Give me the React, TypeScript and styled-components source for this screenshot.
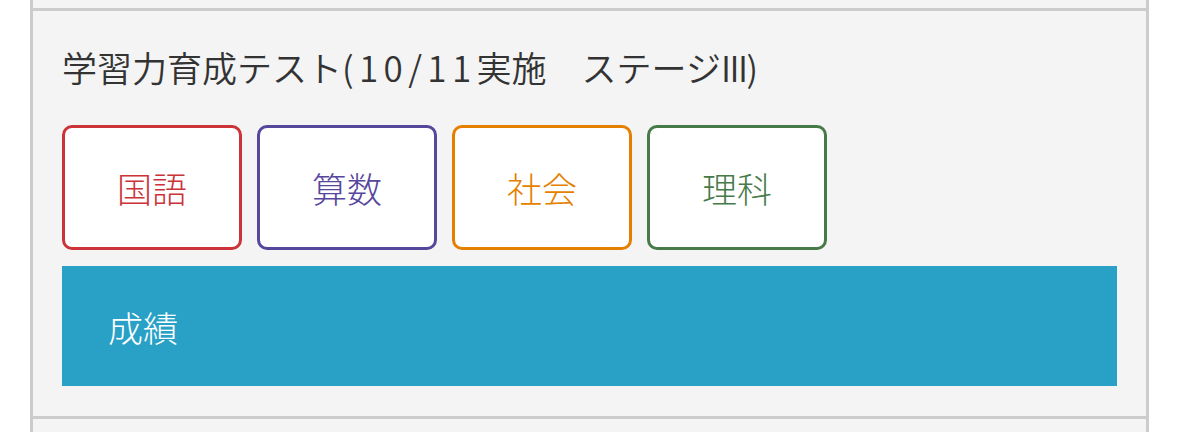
import React from "react";
import styled, { createGlobalStyle } from "styled-components";

const GlobalStyle = createGlobalStyle`
  html, body {
    margin: 0;
    padding: 0;
    background: #ffffff;
    font-family: "Noto Sans CJK JP", "Noto Sans", sans-serif;
  }
`;

const Page = styled.div`
  padding: 0 30px;
  width: 1119px;
  box-sizing: content-box;
`;

const PrevItem = styled.div`
  height: 8px;
  background: #f4f4f4;
  border-left: 3px solid #cccccc;
  border-right: 3px solid #cccccc;
  box-sizing: border-box;
`;

const Item = styled.section`
  background: #f4f4f4;
  border: 3px solid #cccccc;
  box-sizing: border-box;
  padding: 29px 29px 30px 29px;
  display: flex;
  flex-direction: column;
`;

const NextItem = styled.div`
  height: 20px;
  background: #f4f4f4;
  border-left: 3px solid #cccccc;
  border-right: 3px solid #cccccc;
  box-sizing: border-box;
`;

const Title = styled.h2`
  margin: 0;
  font-size: 35px;
  font-weight: 350;
  color: #333333;
  line-height: 53px;
  white-space: nowrap;
`;

const Latin = styled.span<{ $spacing: number }>`
  letter-spacing: ${(p) => p.$spacing}px;
`;

const SubjectRow = styled.div`
  display: flex;
  gap: 15px;
  margin-top: 32px;
`;

const SubjectButton = styled.button<{ $color: string }>`
  width: 180px;
  height: 125px;
  box-sizing: border-box;
  background: #ffffff;
  border: 3px solid ${(p) => p.$color};
  border-radius: 10px;
  color: ${(p) => p.$color};
  font-family: "Noto Sans CJK JP", "Noto Sans", sans-serif;
  font-size: 35px;
  font-weight: 300;
  display: flex;
  align-items: center;
  justify-content: center;
  padding: 0;
  cursor: pointer;
`;

const ResultBar = styled.div`
  margin-top: 16px;
  height: 120px;
  background: #29a1c6;
  color: #ffffff;
  font-size: 35px;
  font-weight: 300;
  display: flex;
  align-items: center;
  padding-left: 46px;
`;

const subjects = [
  { name: "国語", color: "#cc3338" },
  { name: "算数", color: "#56469c" },
  { name: "社会", color: "#e57f00" },
  { name: "理科", color: "#467a48" },
];

export default function App() {
  return (
    <>
      <GlobalStyle />
      <Page>
        <PrevItem />
        <Item>
          <Title>
            学習力育成テスト<Latin $spacing={5.4}>(10/11</Latin>実施　ステージ
            <Latin $spacing={-1.5}>III)</Latin>
          </Title>
          <SubjectRow>
            {subjects.map((s) => (
              <SubjectButton key={s.name} $color={s.color}>
                {s.name}
              </SubjectButton>
            ))}
          </SubjectRow>
          <ResultBar>成績</ResultBar>
        </Item>
        <NextItem />
      </Page>
    </>
  );
}
